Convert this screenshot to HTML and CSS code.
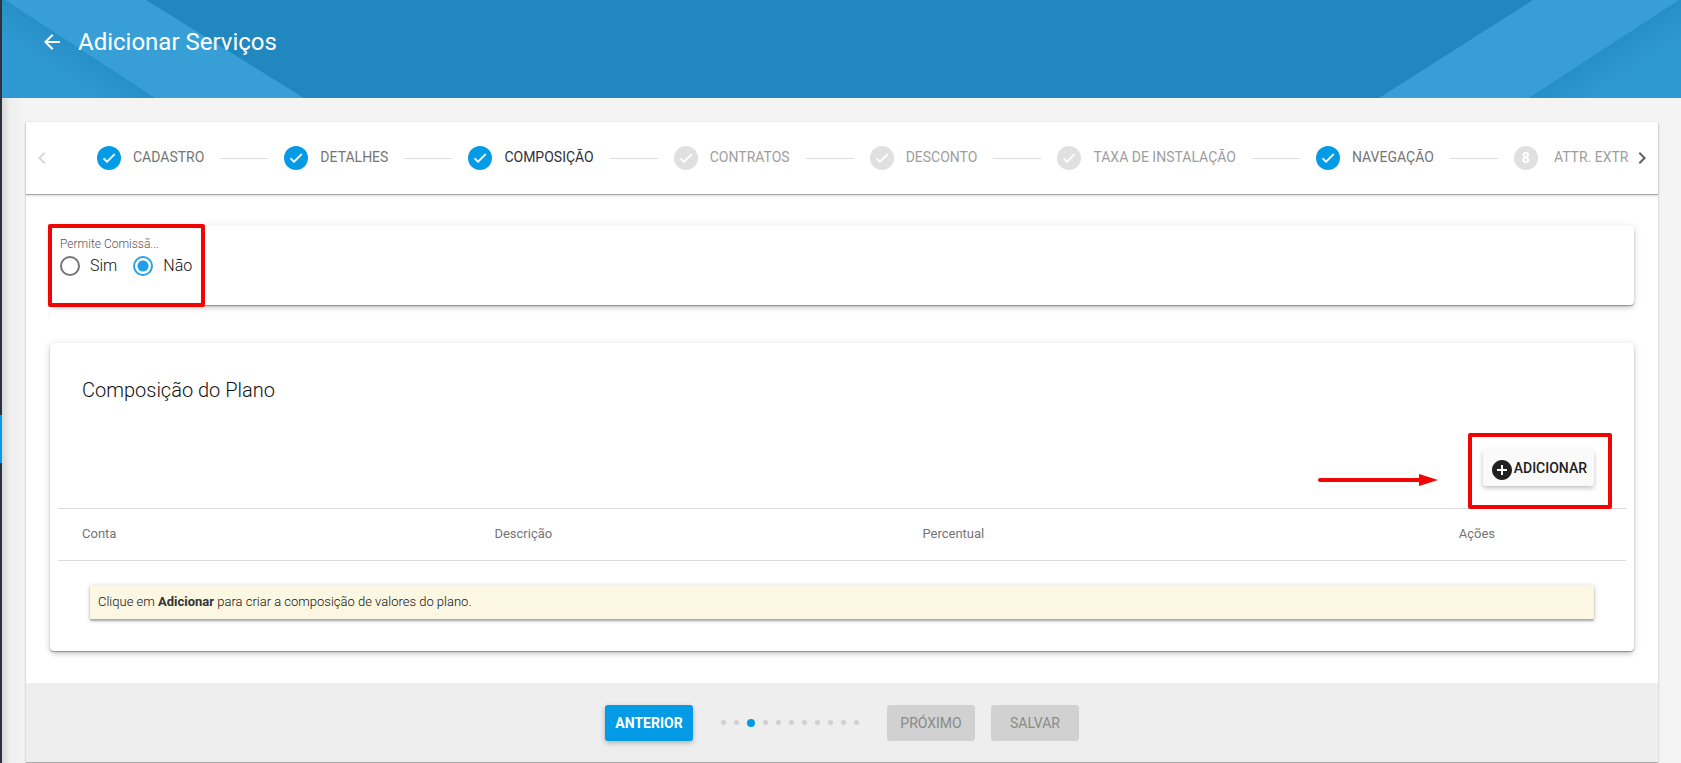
FILE: index.html
```html
<!DOCTYPE html>
<html lang="pt-BR">
<head>
<meta charset="utf-8">
<meta name="viewport" content="width=device-width, initial-scale=1">
<title>Adicionar Serviços</title>
<link rel="stylesheet" href="styles.css">
</head>
<body>
<svg class="sprite" aria-hidden="true">
  <symbol id="check" viewBox="0 0 24 24"><path d="M9 16.17 4.83 12l-1.42 1.41L9 19 21 7l-1.41-1.41z"/></symbol>
</svg>
<div class="app">
  <nav class="rail" aria-label="Menu"><span class="rail-active"></span></nav>
  <div class="page">
    <header class="banner">
      <svg class="banner-art banner-left" viewBox="0 0 320 98" aria-hidden="true">
        <defs>
          <linearGradient id="shadeL" gradientUnits="userSpaceOnUse" x1="80" y1="50" x2="62" y2="78"><stop offset="0" stop-color="#268fc6"/><stop offset="1" stop-color="#2e99d0"/></linearGradient>
        </defs>
        <path fill="url(#shadeL)" d="M0 0h3l152 98H0z"/>
        <path fill="#379fd6" d="M3 0h141l158 98H153z"/>
      </svg>
      <svg class="banner-art banner-right" viewBox="0 0 320 98" aria-hidden="true">
        <defs>
          <linearGradient id="shadeR" gradientUnits="userSpaceOnUse" x1="243" y1="50" x2="261" y2="78"><stop offset="0" stop-color="#268fc6"/><stop offset="1" stop-color="#2e99d0"/></linearGradient>
        </defs>
        <path fill="url(#shadeR)" d="M320 0h-2L168 98h152z"/>
        <path fill="#379fd6" d="M318 0H172L18 98h150z"/>
      </svg>
      <button class="back" type="button" aria-label="Voltar">
        <svg viewBox="0 0 24 24"><path d="M20 11H7.83l5.59-5.59L12 4l-8 8 8 8 1.41-1.41L7.83 13H20v-2z"/></svg>
      </button>
      <h1>Adicionar Serviços</h1>
    </header>
    <main class="wizard">
      <div class="stepper">
        <button class="scroll" type="button" aria-label="Etapas anteriores" disabled>
          <svg viewBox="0 0 24 24"><path d="M15.41 7.41 14 6l-6 6 6 6 1.41-1.41L10.83 12z"/></svg>
        </button>
        <ol class="steps">
          <li class="step done"><span class="dot"><svg><use href="#check"/></svg></span>CADASTRO</li>
          <li class="step done"><span class="dot"><svg><use href="#check"/></svg></span>DETALHES</li>
          <li class="step done current" aria-current="step"><span class="dot"><svg><use href="#check"/></svg></span>COMPOSIÇÃO</li>
          <li class="step"><span class="dot"><svg><use href="#check"/></svg></span>CONTRATOS</li>
          <li class="step"><span class="dot"><svg><use href="#check"/></svg></span>DESCONTO</li>
          <li class="step"><span class="dot"><svg><use href="#check"/></svg></span>TAXA DE INSTALAÇÃO</li>
          <li class="step done"><span class="dot"><svg><use href="#check"/></svg></span>NAVEGAÇÃO</li>
          <li class="step numbered"><span class="dot">8</span>ATTR. EXTR</li>
        </ol>
        <button class="scroll" type="button" aria-label="Próximas etapas">
          <svg viewBox="0 0 24 24"><path d="M10 6 8.59 7.41 13.17 12l-4.58 4.59L10 18l6-6z"/></svg>
        </button>
      </div>
      <div class="content">
        <section class="card commission">
          <fieldset class="field">
            <legend>Permite Comissã...</legend>
            <div class="options">
              <label><input type="radio" name="comissao" value="sim">Sim</label>
              <label><input type="radio" name="comissao" value="nao" checked>Não</label>
            </div>
          </fieldset>
          <span class="mark mark-field"></span>
        </section>
        <section class="card plan">
          <h2>Composição do Plano</h2>
          <div class="toolbar">
            <div class="add-wrap">
              <button class="btn add" type="button">
                <svg viewBox="0 0 24 24"><path d="M12 2C6.48 2 2 6.48 2 12s4.48 10 10 10 10-4.48 10-10S17.52 2 12 2zm5 11h-4v4h-2v-4H7v-2h4V7h2v4h4v2z"/></svg>ADICIONAR
              </button>
              <span class="mark mark-add"></span>
              <svg class="arrow" viewBox="0 0 120 12" aria-hidden="true"><path d="M2 6h100" stroke="#f00505" stroke-width="4" stroke-linecap="round"/><path fill="#f00505" d="M101 0l19 6-19 6z"/></svg>
            </div>
          </div>
          <table>
            <thead>
              <tr><th class="c1">Conta</th><th class="c2">Descrição</th><th class="c3">Percentual</th><th>Ações</th></tr>
            </thead>
          </table>
          <p class="notice">Clique em <strong>Adicionar</strong> para criar a composição de valores do plano.</p>
        </section>
      </div>
      <footer class="actions">
        <button class="btn primary" type="button">ANTERIOR</button>
        <div class="pager" aria-hidden="true"><i></i><i></i><i class="on"></i><i></i><i></i><i></i><i></i><i></i><i></i><i></i><i></i></div>
        <div class="pair">
          <button class="btn" type="button" disabled>PRÓXIMO</button>
          <button class="btn" type="button" disabled>SALVAR</button>
        </div>
      </footer>
    </main>
  </div>
</div>
</body>
</html>
```
FILE: styles.css
```css
* { box-sizing: border-box; }
body {
  margin: 0;
  background: #f4f4f4;
  color: #333;
  font: 14px/20px Roboto, "Liberation Sans", sans-serif;
  overflow: hidden;
}
button { font: inherit; border: 0; padding: 0; }
svg { fill: currentColor; display: block; }
.sprite { display: none; }
.app { display: flex; min-height: 100vh; }
.rail { flex: none; width: 2px; background: #2d323e; padding-top: 415px; }
.rail-active { display: block; height: 48px; background: #039be5; }
.page {
  flex: 1;
  min-width: 0;
  background: linear-gradient(90deg, #d8d8d8, #efeff0 8px, #f4f4f4 24px);
}

.banner {
  position: relative;
  display: flex;
  align-items: flex-start;
  gap: 14px;
  height: 98px;
  padding: 26px 38px;
  background: #2088be;
  color: #fff;
}
.banner-art { position: absolute; top: 0; width: 320px; height: 98px; }
.banner-left { left: 0; }
.banner-right { right: 0; }
.back { position: relative; background: none; color: inherit; padding: 4px 0; }
.back svg { width: 24px; height: 24px; }
h1 { position: relative; margin: 0; font-size: 24px; line-height: 32px; font-weight: 400; }

.wizard {
  margin: 24px 23px 0 24px;
  background: #fff;
  border-radius: 2px;
  box-shadow: 0 1px 3px rgba(0,0,0,.2), 0 1px 1px rgba(0,0,0,.14), 0 2px 1px -1px rgba(0,0,0,.12);
}
.stepper {
  display: flex;
  align-items: center;
  height: 73px;
  padding: 0 4px;
  border-bottom: 1px solid #a8a8a8;
  box-shadow: 0 1px 2px rgba(0,0,0,.16);
}
.scroll { flex: none; width: 24px; background: none; color: #616161; }
.scroll:disabled { color: #d9d9d9; }
.scroll svg { width: 24px; height: 24px; }
.steps {
  flex: 1;
  min-width: 0;
  display: flex;
  margin: 0;
  padding: 0 0 0 43px;
  list-style: none;
  overflow: hidden;
  white-space: nowrap;
}
.step { display: flex; align-items: flex-start; gap: 12px; color: #9e9e9e; line-height: 22px; }
.step:not(:last-child)::after { content: ""; align-self: center; width: 48px; height: 1px; margin: 0 16px 0 4px; background: #dcdcdc; }
.dot {
  display: grid;
  place-items: center;
  width: 24px;
  height: 24px;
  border-radius: 50%;
  background: #e0e0e0;
  color: #fff;
  font-weight: 700;
}
.dot svg { width: 16px; height: 16px; stroke: currentColor; }
.done { color: #757575; }
.done .dot { background: #039be5; }
.current { color: #303038; }
.numbered { gap: 16px; }

.content { padding: 31px 24px 32px; }
.card {
  border-radius: 4px;
  background: #fff;
  box-shadow: 0 3px 5px -1px rgba(0,0,0,.2), 0 1px 8px rgba(0,0,0,.12), 0 1px 1px rgba(0,0,0,.3);
}
.commission { position: relative; height: 79px; padding: 10px; }
.field { margin: 0; padding: 0; border: 0; }
.field legend { padding: 0; font-size: 12px; line-height: 16px; font-weight: 300; color: #555; }
.options { display: flex; gap: 16px; padding-top: 4px; }
.options label { display: flex; align-items: center; gap: 10px; font-size: 16px; line-height: 20px; font-weight: 300; color: #111; }
.options input {
  appearance: none;
  width: 20px;
  height: 20px;
  margin: 0;
  border: 2px solid #757575;
  border-radius: 50%;
}
.options input:checked { border-color: #2ba3e3; background: radial-gradient(circle, #1fa0e6 5px, #fff 6px); }
.mark { position: absolute; border: 4px solid #f00505; border-radius: 2px; pointer-events: none; }
.mark-field { left: -2px; top: -2px; width: 157px; height: 83px; }

.plan { margin-top: 38px; padding: 32px 8px; }
.plan h2 { margin: 0 24px; font-size: 20px; line-height: 30px; font-weight: 300; color: #111; }
.toolbar { display: flex; justify-content: flex-end; padding: 45px 32px 22px; }
.add-wrap { position: relative; }
.btn {
  min-width: 88px;
  height: 36px;
  border-radius: 3px;
  font-weight: 500;
  color: #212121;
}
.add {
  display: flex;
  align-items: center;
  padding: 0 7px;
  background: #fafafa;
  box-shadow: 0 2px 5px rgba(0,0,0,.26);
}
.add svg { width: 24px; height: 24px; margin-top: 4px; }
.mark-add { left: -15px; top: -17px; right: -18px; bottom: -23px; }
.arrow { position: absolute; right: 156px; top: 24px; width: 120px; height: 12px; }
table {
  width: 100%;
  table-layout: fixed;
  border-collapse: collapse;
  border-top: 1px solid #dcdcdc;
  border-bottom: 1px solid #dcdcdc;
}
th { height: 52px; padding: 0 0 2px 24px; text-align: left; font-size: 13px; font-weight: 400; color: #757575; }
.c1 { width: 26.3%; }
.c2 { width: 27.3%; }
.c3 { width: 34.2%; }
.notice {
  margin: 24px 32px 0;
  padding: 7px 8px;
  background: #fcf7e3;
  font-size: 13px;
  font-weight: 300;
  color: #111;
  border-radius: 1px;
  box-shadow: 0 1px 5px rgba(0,0,0,.2), 0 2px 2px rgba(0,0,0,.25);
}
.notice strong { font-weight: 700; color: #333; }

.actions {
  display: flex;
  justify-content: center;
  align-items: center;
  height: 80px;
  background: #eee;
  border-bottom: 1px solid #aaa;
}
.primary { background: #039be5; color: #fff; font-weight: 700; box-shadow: 0 2px 5px rgba(0,0,0,.26); }
.btn:disabled { background: #d1d1d1; color: #8a8a8a; font-weight: 400; }
.pager { display: flex; align-items: center; gap: 8px; padding: 0 28px; }
.pager i { width: 5px; height: 5px; border-radius: 50%; background: #d0d0d0; }
.pager .on { width: 8px; height: 8px; background: #039be5; }
.pair { display: flex; gap: 16px; }
```
